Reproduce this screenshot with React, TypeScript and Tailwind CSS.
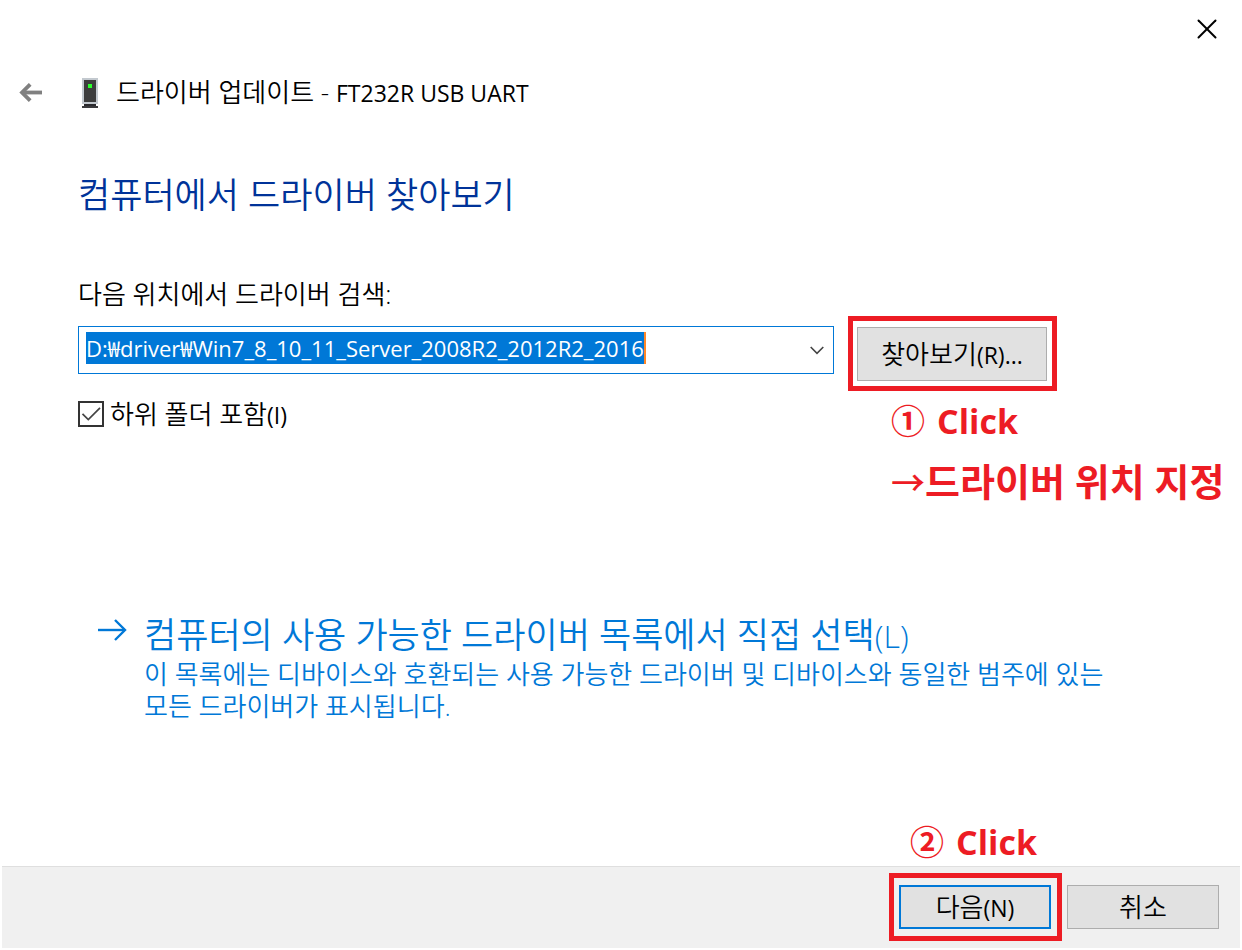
import React from 'react';
import { X } from 'lucide-react';

const DRIVER_PATH = 'D:₩driver₩Win7_8_10_11_Server_2008R2_2012R2_2016';

export default function App() {
  return (
    <div className="flex min-h-screen flex-col bg-white px-0.5 pb-0.5 font-['Open_Sans','Noto_Sans_CJK_KR',sans-serif] text-[26px] leading-8 font-[350] break-keep text-black">
      {/* Window controls */}
      <div className="flex justify-end px-4 pt-3">
        <button type="button" aria-label="닫기" className="p-0">
          <X size={34} strokeWidth={2} absoluteStrokeWidth />
        </button>
      </div>

      {/* Title bar */}
      <header className="mt-[30px] flex items-center px-4">
        <button type="button" aria-label="뒤로" className="mr-[34px]">
          <BackIcon />
        </button>
        <DriverIcon />
        <span className="ml-4">
          드라이버 업데이트 - <Latin>FT232R USB UART</Latin>
        </span>
      </header>

      <main className="pl-[76px]">
        <h1 className="mt-16 text-[35px] leading-[44px] text-[#003399]">
          컴퓨터에서 드라이버 찾아보기
        </h1>

        <label htmlFor="path" className="mt-[61px] block">
          다음 위치에서 드라이버 검색:
        </label>

        <div className="mt-1.5 grid grid-cols-[minmax(0,1fr)_380px] gap-x-3.5 pr-3">
          <div className="pt-2.5">
            <PathBox />
            <label className="mt-6 flex h-8 w-fit items-center gap-1.5">
              <Checkbox />
              <span>
                하위 폴더 포함<Latin>(I)</Latin>
              </span>
            </label>
          </div>

          <div>
            <Highlight className="w-[209px] pt-1.5 pr-[5px] pb-[5px] pl-1">
              <button
                type="button"
                className="h-[54px] w-full border border-[#adadad] bg-[#e1e1e1]"
              >
                찾아보기<Latin>(R)...</Latin>
              </button>
            </Highlight>
            <div className="pt-1.5 pl-[43px]">
              <Note mark="①">Click</Note>
              <p className="mt-3 text-[38px] leading-[48px] font-bold whitespace-nowrap text-[#ed1c24]">
                <span className="text-[34px] font-medium">→</span>드라이버 위치 지정
              </p>
            </div>
          </div>
        </div>

        <button type="button" className="mt-[106px] flex items-start pl-5 text-left text-[#0078d7]">
          <LinkArrow />
          <span className="ml-4 block max-w-[1000px]">
            <span className="block text-[35px] leading-[44px]">
              컴퓨터의 사용 가능한 드라이버 목록에서 직접 선택
              <span className="text-[32px]">(L)</span>
            </span>
            <span className="block">
              이 목록에는 디바이스와 호환되는 사용 가능한 드라이버 및 디바이스와 동일한 범주에 있는
              모든 드라이버가 표시됩니다.
            </span>
          </span>
        </button>
      </main>

      <div className="mt-auto ml-auto w-[350px] pl-5">
        <Note mark="②">Click</Note>
      </div>

      <footer className="flex h-[82px] items-start justify-end gap-[5px] border-t border-[#dfdfdf] bg-[#f0f0f0] pt-1.5 pr-[21px]">
        <Highlight className="w-[173px] pt-[7px] pr-1.5 pb-[7px] pl-[5px]">
          <button
            type="button"
            className="h-[44px] w-full border-2 border-[#0078d7] bg-[#e1e1e1] leading-[40px]"
          >
            다음<Latin>(N)</Latin>
          </button>
        </Highlight>
        <button
          type="button"
          className="mt-3 h-[44px] w-[152px] border border-[#adadad] bg-[#e1e1e1]"
        >
          취소
        </button>
      </footer>
    </div>
  );
}

const Latin: React.FC<{ children: React.ReactNode }> = ({ children }) => (
  <span className="text-[23px] font-normal">{children}</span>
);

const Highlight: React.FC<{ className: string; children: React.ReactNode }> = ({
  className,
  children,
}) => <div className={`border-5 border-[#ed1c24] ${className}`}>{children}</div>;

const Note: React.FC<{ mark: string; children: React.ReactNode }> = ({ mark, children }) => (
  <p className="flex items-center gap-3 text-[34px] leading-[48px] font-bold text-[#ed1c24]">
    <span>{mark}</span>
    <span>{children}</span>
  </p>
);

const PathBox: React.FC = () => (
  <div className="flex h-12 items-start justify-between border border-[#0078d7] pl-[7px]">
    {/* The whole path is selected, with the caret at its end */}
    <input
      id="path"
      type="text"
      defaultValue={DRIVER_PATH}
      className="mt-[5px] field-sizing-content h-8 max-w-full border-r-2 border-[#ff8728] bg-[#0078d7] text-[22px] font-normal text-white outline-none"
    />
    <button type="button" aria-label="목록 열기" className="flex h-full w-8 items-center justify-center">
      <svg width="14" height="9" viewBox="0 0 14 9" fill="none" stroke="#444" strokeWidth="1.6">
        <path d="M0.7 1 L7 7.3 L13.3 1" />
      </svg>
    </button>
  </div>
);

const Checkbox: React.FC = () => (
  <span className="relative h-[26px] w-[26px]">
    <input
      type="checkbox"
      defaultChecked
      className="peer block h-[26px] w-[26px] appearance-none border-2 border-[#333] bg-white"
    />
    <svg
      className="pointer-events-none absolute inset-0 hidden peer-checked:block"
      width="26"
      height="26"
      viewBox="0 0 26 26"
      fill="none"
      stroke="#444"
      strokeWidth="1.7"
    >
      <path d="M4.5 12.8 L10.3 18.6 L22 6.8" />
    </svg>
  </span>
);

const BackIcon: React.FC = () => (
  <svg width="26" height="20" viewBox="0 0 26 20" fill="none" stroke="#808080" strokeWidth="3.8">
    <path d="M24 9.5 H4" />
    <path d="M12.2 1.3 L4 9.5 L12.2 17.7" />
  </svg>
);

const DriverIcon: React.FC = () => (
  <svg width="22" height="32" viewBox="0 0 22 32" shapeRendering="crispEdges">
    <rect x="4" y="1" width="16" height="26" fill="#c3c9cf" />
    <rect x="6" y="3" width="12" height="22" fill="#3d3d3d" />
    <rect x="10" y="7" width="4" height="4" fill="#2bff2b" />
    <rect x="6" y="27" width="12" height="2" fill="#2b2b2f" />
    <rect x="4" y="29" width="16" height="2" fill="#3a3a3d" />
  </svg>
);

const LinkArrow: React.FC = () => (
  <svg className="mt-1.5" width="30" height="22" viewBox="0 0 30 22" fill="none" stroke="#0078d7" strokeWidth="2.4">
    <path d="M0 11 H27" />
    <path d="M17 1 L27 11 L17 21" />
  </svg>
);
